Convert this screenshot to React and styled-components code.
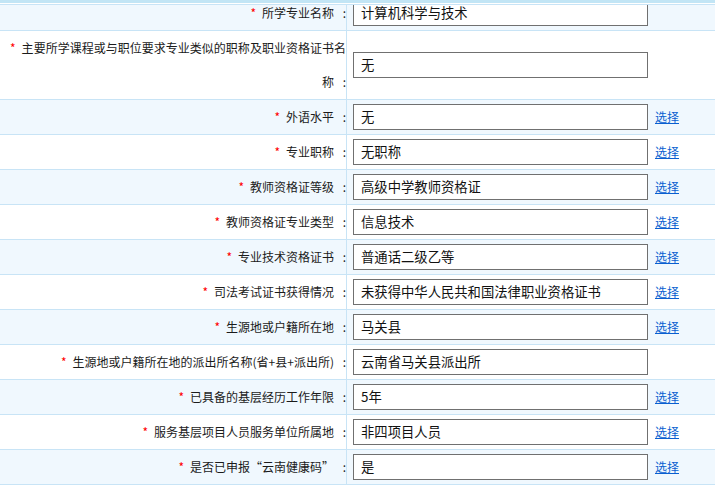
import React from "react";
import styled, { createGlobalStyle } from "styled-components";

const Global = createGlobalStyle`
  html, body { margin: 0; padding: 0; background: #fff; }
  body { font-family: "Noto Sans CJK SC", "Noto Sans", sans-serif; }
`;

const Frame = styled.div`
  position: relative;
  width: 715px;
  height: 486px;
  overflow: hidden;
  background: #fff;
`;

const TopStrip = styled.div`
  position: absolute;
  top: 0;
  left: 0;
  right: 0;
  height: 3px;
  background: #c2e5f5;
  border-bottom: 1px solid #ffffff;
  box-shadow: 0 1px 0 #c8e4f6;
  z-index: 2;
`;

const Table = styled.div`
  margin-top: -4px;
  width: 760px;
`;

const Row = styled.div`
  display: grid;
  grid-template-columns: 347px 1fr;
  background: ${(p) => (p.$shade ? "#f0f8fe" : "#ffffff")};
  border-bottom: 1px solid #c8e4f6;
`;

const LabelCell = styled.div`
  padding: 0 0 0 10px;
  border-right: 1px solid #c8e4f6;
  font-size: 12px;
  line-height: 34px;
  color: #1b1b1b;
  text-align: justify;
  text-align-last: right;
`;

const Star = styled.span`
  color: #ff0000;
  margin-right: 6px;
`;

const Colon = styled.span`
  display: inline-block;
  width: 12px;
  text-align: center;
`;

const ValueCell = styled.div`
  display: flex;
  align-items: center;
  padding-left: 6px;
`;

const Field = styled.div`
  box-sizing: border-box;
  width: 295px;
  height: 26px;
  border: 1px solid #707070;
  background: #fff;
  padding: 0 7px;
  font-size: 13.33px;
  line-height: 24px;
  color: #111;
  white-space: nowrap;
  overflow: hidden;
`;

const Pick = styled.a`
  margin-left: 7px;
  font-size: 12px;
  line-height: 16px;
  color: #0a5fd0;
  text-decoration: underline;
  cursor: pointer;
`;

const rows = [
  { label: "所学专业名称", value: "计算机科学与技术", link: false },
  { label: "主要所学课程或与职位要求专业类似的职称及职业资格证书名称", value: "无", link: false },
  { label: "外语水平", value: "无", link: true },
  { label: "专业职称", value: "无职称", link: true },
  { label: "教师资格证等级", value: "高级中学教师资格证", link: true },
  { label: "教师资格证专业类型", value: "信息技术", link: true },
  { label: "专业技术资格证书", value: "普通话二级乙等", link: true },
  { label: "司法考试证书获得情况", value: "未获得中华人民共和国法律职业资格证书", link: true },
  { label: "生源地或户籍所在地", value: "马关县", link: true },
  { label: "生源地或户籍所在地的派出所名称(省+县+派出所)", value: "云南省马关县派出所", link: false },
  { label: "已具备的基层经历工作年限", value: "5年", link: true },
  { label: "服务基层项目人员服务单位所属地", value: "非四项目人员", link: true },
  { label: "是否已申报“云南健康码”", value: "是", link: true },
];

export default function App() {
  return (
    <>
      <Global />
      <Frame>
        <TopStrip />
        <Table>
          {rows.map((r, i) => (
            <Row key={i} $shade={i % 2 === 0}>
              <LabelCell>
                <Star>*</Star>
                {r.label}
                <Colon>:</Colon>
              </LabelCell>
              <ValueCell>
                <Field>{r.value}</Field>
                {r.link && <Pick>选择</Pick>}
              </ValueCell>
            </Row>
          ))}
        </Table>
      </Frame>
    </>
  );
}
